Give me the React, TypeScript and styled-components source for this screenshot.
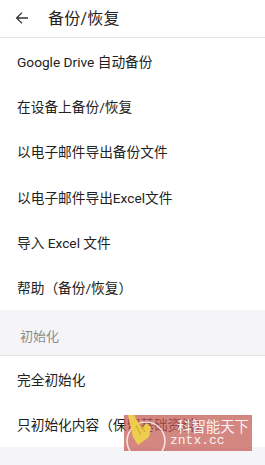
import React from "react";
import styled, { createGlobalStyle } from "styled-components";

const Global = createGlobalStyle`
  html, body { margin: 0; padding: 0; background: #ffffff; }
  body { font-family: Roboto, "Noto Sans CJK SC", sans-serif; }
`;

const Page = styled.div`
  position: relative;
  width: 265px;
  height: 465px;
  overflow: hidden;
  background: #f5f5f7;
  display: flex;
  flex-direction: column;
`;

const Header = styled.div`
  height: 38px;
  box-sizing: border-box;
  background: #fff;
  border-bottom: 1px solid #e4e4e6;
  display: flex;
  align-items: center;
  padding-left: 15px;
  gap: 19px;
`;

const BackButton = styled.div`
  width: 14px;
  height: 14px;
  display: flex;
  align-items: center;
  justify-content: center;
  color: #333;
  margin-top: -2px;
`;

const Title = styled.div`
  font-size: 16px;
  color: #222;
  letter-spacing: 0.2px;
  margin-top: -3px;
`;

const List = styled.div`
  background: #fff;
  display: flex;
  flex-direction: column;
`;

const Row = styled.div`
  height: 45.33px;
  display: flex;
  align-items: center;
  padding-left: 17px;
  font-size: 13.7px;
  color: #222;
  white-space: nowrap;
`;

const Section = styled.div`
  height: 46px;
  box-sizing: border-box;
  border-bottom: 1px solid #e4e4e6;
  display: flex;
  align-items: flex-end;
  padding-left: 20px;
  padding-bottom: 10px;
  font-size: 13px;
  color: #8a8a8e;
`;

const Watermark = styled.div`
  position: absolute;
  left: 124px;
  top: 415px;
  width: 128px;
  height: 36px;
  background: rgba(196, 88, 80, 0.72);
  display: flex;
  align-items: center;
  overflow: hidden;
`;

const WmLogo = styled.div`
  width: 46px;
  height: 36px;
  flex: none;
  position: relative;
`;

const WmText = styled.div`
  display: flex;
  flex-direction: column;
  align-items: flex-start;
  line-height: 1;
  color: rgba(255, 255, 255, 0.92);
  gap: 1px;
`;

const WmCn = styled.span`
  font-size: 14.4px;
  margin-left: 7px;
  font-family: "Noto Sans CJK SC", sans-serif;
`;

const WmEn = styled.span`
  font-size: 13px;
  font-family: "Liberation Mono", monospace;
`;

const items1 = [
  "Google Drive 自动备份",
  "在设备上备份/恢复",
  "以电子邮件导出备份文件",
  "以电子邮件导出Excel文件",
  "导入 Excel 文件",
  "帮助（备份/恢复）",
];

const items2 = ["完全初始化", "只初始化内容（保留基础资料）"];

export default function App() {
  return (
    <>
      <Global />
      <Page>
        <Header>
          <BackButton>
            <svg width="14" height="14" viewBox="0 0 14 14" fill="none">
              <path d="M13 7H1.8M7 1.6L1.6 7L7 12.4" stroke="#333" strokeWidth="1.3" />
            </svg>
          </BackButton>
          <Title>备份/恢复</Title>
        </Header>
        <List>
          {items1.map((t) => (
            <Row key={t}>{t}</Row>
          ))}
        </List>
        <Section>初始化</Section>
        <List>
          {items2.map((t) => (
            <Row key={t}>{t}</Row>
          ))}
        </List>
        <Watermark>
          <WmLogo>
            <svg width="46" height="36" viewBox="0 0 46 36">
              <circle cx="22" cy="26" r="19" fill="none" stroke="rgba(255,255,255,0.75)" strokeWidth="1.6" />
              <path d="M4 0 L10 0 L18 14 L22 8 L27 12 L25 22 L14 30 L9 22 Z" fill="#f1d44a" opacity="0.92" />
              <path d="M12 10 L17 20 M16 8 L21 17" stroke="#c9a52a" strokeWidth="1" />
            </svg>
          </WmLogo>
          <WmText>
            <WmCn>科智能天下</WmCn>
            <WmEn>zntx.cc</WmEn>
          </WmText>
        </Watermark>
      </Page>
    </>
  );
}
